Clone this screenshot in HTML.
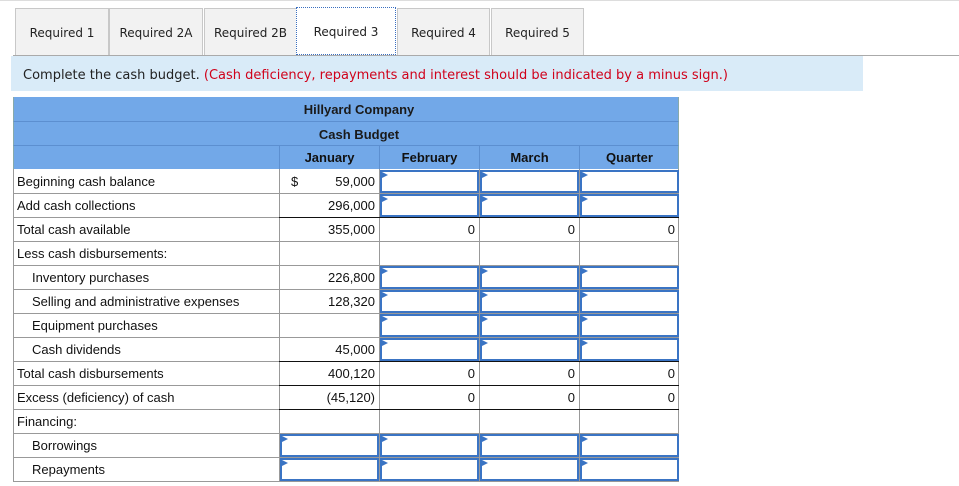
<!DOCTYPE html><html><head><style>
body{margin:0;width:959px;height:486px;background:#fff;font-family:"Liberation Sans",Arial,sans-serif;position:relative;overflow:hidden}
.topline{position:absolute;left:0;top:0;width:959px;height:1px;background:#ddd}
.tab{position:absolute;top:8px;height:46px;background:#f2f2f2;border:1px solid #c8c8c8;border-bottom:none;font-family:"DejaVu Sans",sans-serif;font-size:12px;line-height:48px;text-align:center;color:#222}
.tab.sel{background:#fff;border:1px dotted #3a6fc0;height:46px;top:7px}
.tabline{position:absolute;left:13px;top:55px;width:946px;height:1px;background:#aaa}
.band{position:absolute;left:11px;top:56px;width:852px;height:35px;background:#d9ebf8;font-family:"DejaVu Sans",sans-serif;font-size:13px;line-height:39px;color:#222;padding-left:12px;box-sizing:border-box}
.band span{color:#d0021b}
.hdr{position:absolute;left:13px;width:666px;height:24px;background:#72a8e8;font-weight:bold;font-size:13px;line-height:25px;color:#1a1a1a;box-sizing:border-box;border-left:1px solid #8aa;border-right:1px solid #8aa}
.c{position:absolute;box-sizing:border-box;font-size:13px;line-height:25px;color:#111}
.lbl{padding-left:4px}
.num{text-align:right;padding-right:4px}
.inp{position:absolute;box-sizing:border-box;border:2px solid #3a74c4;background:#fff}
.inp:after{content:"";position:absolute;left:0;top:0;border-left:6px solid #3a74c4;border-top:3px solid transparent;border-bottom:3px solid transparent}
.g{position:absolute;background:#999}
.k{position:absolute;background:#111}
</style></head><body>
<div class="topline"></div>
<div class="tab" style="left:15px;width:92px">Required 1</div>
<div class="tab" style="left:109px;width:92px">Required 2A</div>
<div class="tab" style="left:204px;width:91px">Required 2B</div>
<div class="tab sel" style="left:296px;width:98px">Required 3</div>
<div class="tab" style="left:397px;width:91px">Required 4</div>
<div class="tab" style="left:491px;width:91px">Required 5</div>
<div class="tabline"></div>
<div class="band">Complete the cash budget. <span>(Cash deficiency, repayments and interest should be indicated by a minus sign.)</span></div>
<div style="position:absolute;left:13px;top:97px;width:666px;height:1px;background:#777"></div>
<div class="hdr" style="top:97px;text-align:center;padding-left:26px">Hillyard Company</div>
<div class="hdr" style="top:121px;text-align:center;padding-left:26px;border-top:1px solid #5c8fd0">Cash Budget</div>
<div class="hdr" style="top:145px;border-top:1px solid #5c8fd0"></div>
<div class="c" style="left:279px;top:145px;width:100px;text-align:center;font-weight:bold;border-left:1px solid #5c8fd0">January</div>
<div class="c" style="left:379px;top:145px;width:100px;text-align:center;font-weight:bold;border-left:1px solid #5c8fd0">February</div>
<div class="c" style="left:479px;top:145px;width:100px;text-align:center;font-weight:bold;border-left:1px solid #5c8fd0">March</div>
<div class="c" style="left:579px;top:145px;width:100px;text-align:center;font-weight:bold;border-left:1px solid #5c8fd0">Quarter</div>
<div id="rows"></div>
<script>
var rows=[
["Beginning cash balance",0,["59,000","i","i","i"]],
["Add cash collections",0,["296,000","i","i","i"]],
["Total cash available",0,["355,000","0","0","0"],1],
["Less cash disbursements:",0,["","","",""]],
["Inventory purchases",1,["226,800","i","i","i"]],
["Selling and administrative expenses",1,["128,320","i","i","i"]],
["Equipment purchases",1,["","i","i","i"]],
["Cash dividends",1,["45,000","i","i","i"]],
["Total cash disbursements",0,["400,120","0","0","0"],1],
["Excess (deficiency) of cash",0,["(45,120)","0","0","0"],1],
["Financing:",0,["","","",""],1],
["Borrowings",1,["i","i","i","i"]],
["Repayments",1,["i","i","i","i"]]];
var h="";
h+='<div class="g" style="left:13px;top:169px;width:1px;height:313px"></div>';
h+='<div class="g" style="left:678px;top:169px;width:1px;height:313px"></div>';
for(var c=0;c<4;c++)h+='<div class="g" style="left:'+(279+c*100)+'px;top:169px;width:1px;height:313px"></div>';
for(var i=0;i<rows.length;i++){var r=rows[i],y=169+i*24;
h+='<div class="g" style="left:13px;top:'+(y+24)+'px;width:666px;height:1px"></div>';
if(r[3])h+='<div class="k" style="left:279px;top:'+y+'px;width:400px;height:1px"></div>';
h+='<div class="c lbl" style="left:13px;top:'+y+'px;width:266px;height:24px;padding-left:'+(r[1]?19:4)+'px">'+r[0]+'</div>';
for(var c=0;c<4;c++){var v=r[2][c],x=279+c*100;
if(v=="i")h+='<div class="inp" style="left:'+(x+1)+'px;top:'+(y+1)+'px;width:99px;height:23px"></div>';
else h+='<div class="c num" style="left:'+x+'px;top:'+y+'px;width:100px;height:24px">'+v+'</div>';}
if(i==0)h+='<div class="c" style="left:291px;top:'+y+'px">$</div>';}
document.getElementById("rows").innerHTML=h;
</script>
</body></html>
